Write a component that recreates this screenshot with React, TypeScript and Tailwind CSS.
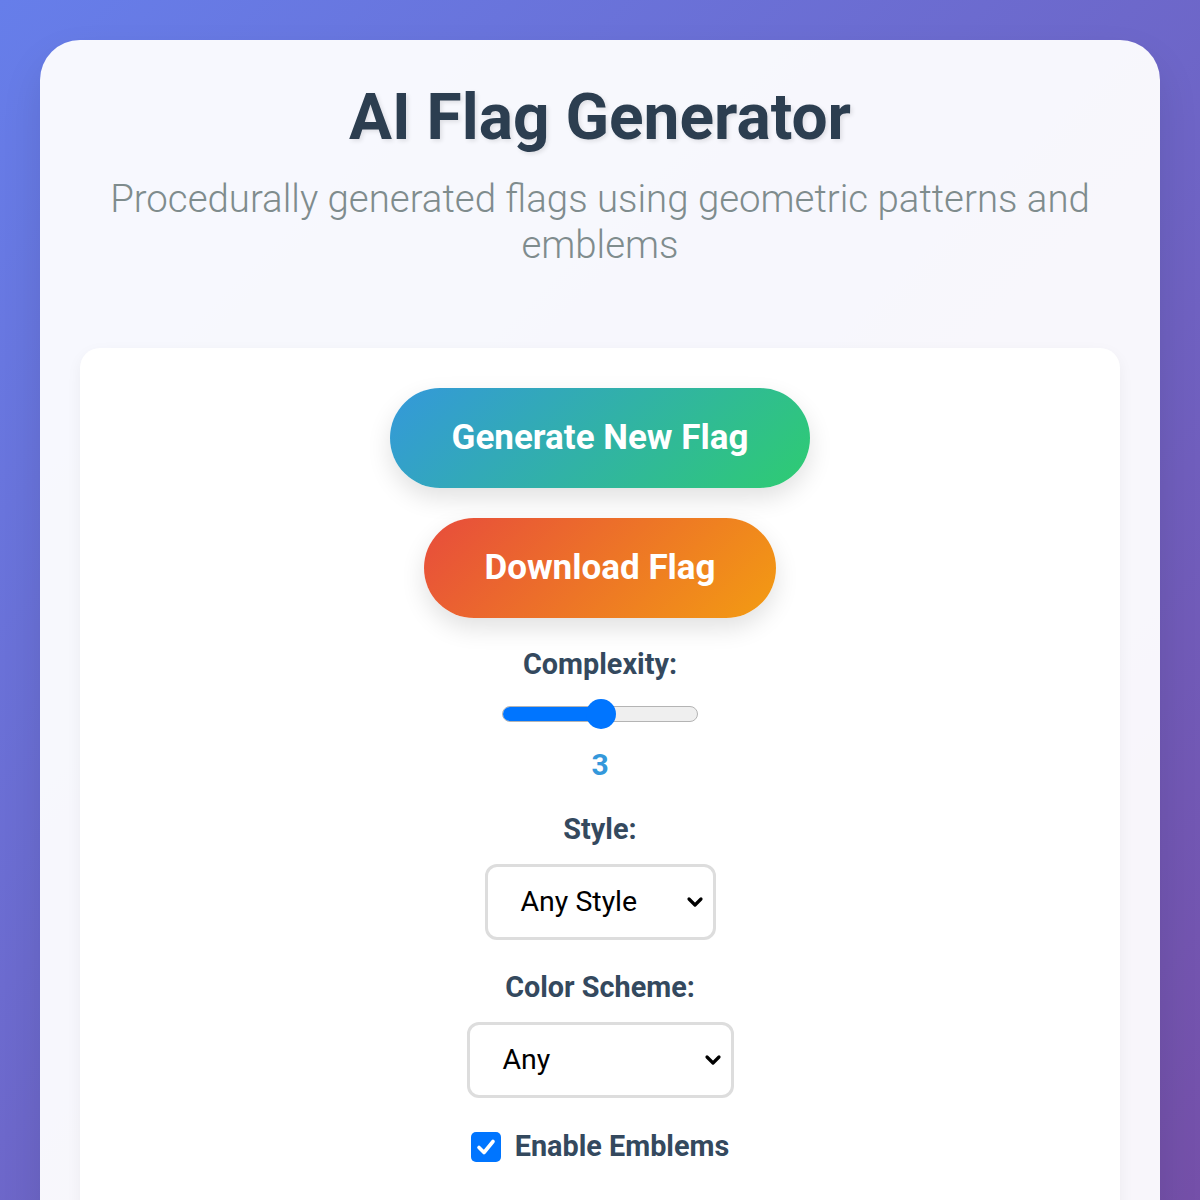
import React from "react";

function Chevron() {
  return (
    <svg width="18" height="12" viewBox="0 0 18 12" className="shrink-0">
      <path d="M3 3 L9 9 L15 3" fill="none" stroke="#000" strokeWidth="3.2" strokeLinecap="round" strokeLinejoin="round" />
    </svg>
  );
}

export default function App() {
  return (
    <div
      className="min-h-[1200px] w-full bg-[linear-gradient(135deg,#667eea_0%,#764ba2_100%)] px-[40px] pt-[40px]"
      style={{ fontFamily: "Roboto, 'Liberation Sans', sans-serif" }}
    >
      <div className="rounded-[40px] bg-white/95 px-[40px] pt-[40px] pb-[40px] shadow-[0_20px_40px_rgba(0,0,0,0.1)]">
        <div className="flex flex-col items-center text-center">
          <h1 className="text-[64px] font-bold leading-[76px] text-[#2c3e50] [text-shadow:2px_2px_4px_rgba(0,0,0,0.1)]">
            AI Flag Generator
          </h1>
          <p className="mt-[20px] max-w-[1000px] text-[38.4px] font-light leading-[46px] text-[#7f8c8d]">
            Procedurally generated flags using geometric patterns and emblems
          </p>
        </div>

        <div className="mt-[80px] flex flex-col items-center rounded-[20px] bg-white pt-[40px] pb-[40px] shadow-[0_5px_15px_rgba(0,0,0,0.05)]">
          <button className="flex h-[100px] items-center justify-center rounded-full bg-[linear-gradient(135deg,#3498db,#2ecc71)] px-[62px] text-[35px] font-bold text-white shadow-[0_10px_25px_rgba(0,0,0,0.12)]">
            Generate New Flag
          </button>
          <button className="mt-[30px] flex h-[100px] items-center justify-center rounded-full bg-[linear-gradient(135deg,#e74c3c,#f39c12)] px-[60px] text-[35px] font-bold text-white shadow-[0_10px_25px_rgba(0,0,0,0.12)]">
            Download Flag
          </button>

          <div className="mt-[30px] text-[28.8px] font-bold leading-[33px] text-[#34495e]">Complexity:</div>
          <div className="relative mt-[18px] flex h-[30px] w-[196px] items-center">
            <div className="flex h-[16px] w-full overflow-hidden rounded-full border-[1.5px] border-[#b4b4b4] bg-[#efefef]">
              <div className="h-full w-[98px] bg-[#0075ff]" />
            </div>
            <div className="absolute left-[84px] top-[0px] h-[30px] w-[30px] rounded-full bg-[#0075ff]" />
          </div>
          <div className="mt-[19px] text-[30px] font-bold leading-[33px] text-[#3498db]">3</div>

          <div className="mt-[32px] text-[28.8px] font-bold leading-[33px] text-[#34495e]">Style:</div>
          <div className="mt-[18px] flex h-[76px] w-[231px] items-center justify-between rounded-[12px] border-[3px] border-[#dddddd] bg-white pl-[33px] pr-[9px]">
            <span className="text-[28.5px] leading-none text-black">Any Style</span>
            <Chevron />
          </div>

          <div className="mt-[31px] text-[28.8px] font-bold leading-[33px] text-[#34495e]">Color Scheme:</div>
          <div className="mt-[18px] flex h-[76px] w-[267px] items-center justify-between rounded-[12px] border-[3px] border-[#dddddd] bg-white pl-[33px] pr-[9px]">
            <span className="text-[28.5px] leading-none text-black">Any</span>
            <Chevron />
          </div>

          <div className="mt-[32px] flex items-center gap-[14px]">
            <div className="flex h-[30px] w-[30px] items-center justify-center rounded-[5px] bg-[#0075ff]">
              <svg width="22" height="22" viewBox="0 0 22 22">
                <path d="M4 11.5 L9 16.5 L18 5.5" fill="none" stroke="#fff" strokeWidth="3.6" strokeLinecap="round" strokeLinejoin="round" />
              </svg>
            </div>
            <span className="text-[28.8px] font-bold leading-[33px] text-[#34495e]">Enable Emblems</span>
          </div>
          <div className="h-[200px]" />
        </div>
      </div>
    </div>
  );
}
